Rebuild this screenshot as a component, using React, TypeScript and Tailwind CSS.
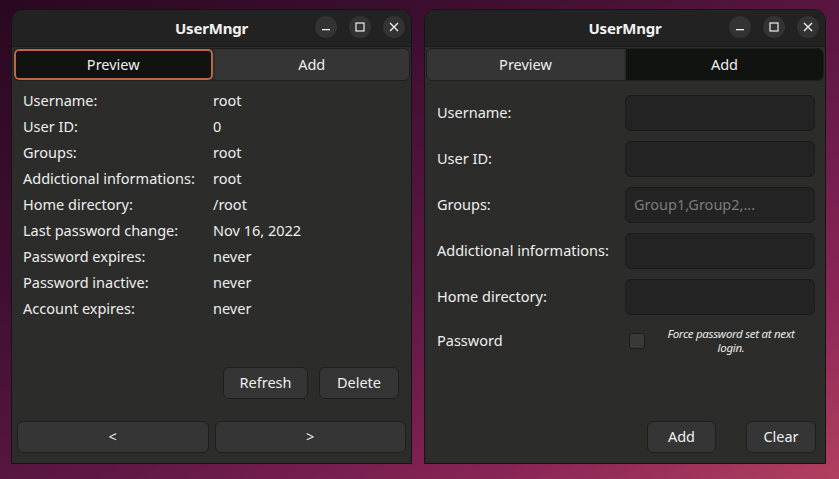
import React from "react";

const font = "font-['Noto_Sans','Open_Sans',sans-serif]";

interface TitleBarProps {
  title: string;
}

const TitleBar: React.FC<TitleBarProps> = ({ title }) => {
  return (
    <div className="relative h-[37px] shrink-0 bg-[#222222] border-b border-[#1a1a1a] flex items-center justify-center">
      <span className="text-[15px] font-bold text-[#f2f2f2] tracking-[-0.2px]">{title}</span>
      <div className="absolute right-[6px] top-[6px] flex gap-[12px]">
        <div className="w-[22px] h-[22px] rounded-full bg-[#333333] flex items-center justify-center">
          <svg width="10" height="10" viewBox="0 0 10 10">
            <rect x="1" y="7" width="8" height="1.3" fill="#eeeeee" />
          </svg>
        </div>
        <div className="w-[22px] h-[22px] rounded-full bg-[#333333] flex items-center justify-center">
          <svg width="10" height="10" viewBox="0 0 10 10">
            <rect x="1" y="1" width="8" height="8" fill="none" stroke="#eeeeee" strokeWidth="1.2" />
          </svg>
        </div>
        <div className="w-[22px] h-[22px] rounded-full bg-[#333333] flex items-center justify-center">
          <svg width="10" height="10" viewBox="0 0 10 10">
            <path d="M1 1 L9 9 M9 1 L1 9" stroke="#eeeeee" strokeWidth="1.4" />
          </svg>
        </div>
      </div>
    </div>
  );
};

interface TabsProps {
  active: "preview" | "add";
  focused?: boolean;
}

const Tabs: React.FC<TabsProps> = ({ active, focused }) => {
  const on = "bg-[#111311]";
  const off = "bg-[#353535]";
  return (
    <div className="mx-[1px] mt-[1px] h-[33px] shrink-0 flex rounded-[6px] border border-[#1e1e1e] overflow-hidden text-[14.5px] text-[#eeeeee]">
      <div
        className={
          active === "preview"
            ? focused
              ? "flex-1 flex items-center justify-center bg-[#111311] border-2 border-[#b86a48] rounded-[5px]"
              : `flex-1 flex items-center justify-center ${on}`
            : `flex-1 flex items-center justify-center ${off}`
        }
      >
        Preview
      </div>
      <div className={`w-[2px] ${active === "preview" && focused ? "bg-[#2c2d2b]" : "bg-transparent"}`} />
      <div
        className={
          active === "add"
            ? `flex-1 flex items-center justify-center ${on}`
            : `flex-1 flex items-center justify-center ${off}`
        }
      >
        Add
      </div>
    </div>
  );
};

const rows: [string, string][] = [
  ["Username:", "root"],
  ["User ID:", "0"],
  ["Groups:", "root"],
  ["Addictional informations:", "root"],
  ["Home directory:", "/root"],
  ["Last password change:", "Nov 16, 2022"],
  ["Password expires:", "never"],
  ["Password inactive:", "never"],
  ["Account expires:", "never"],
];

const btn =
  "h-[32px] rounded-[6px] bg-[#353535] border border-[#1f1f1f] flex items-center justify-center text-[14.5px] text-[#eeeeee]";

const PreviewWindow: React.FC = () => {
  return (
    <div className="w-[401px] h-[455px] shrink-0 flex flex-col rounded-t-[12px] border border-[#151515] bg-[#2c2d2b] overflow-hidden">
      <TitleBar title="UserMngr" />
      <Tabs active="preview" focused />
      <div className="pl-[11px] pt-[7px] grid grid-cols-[190px_1fr] auto-rows-[26px] items-center text-[14.5px] text-[#eeeeee]">
        {rows.map(([k, v]) => (
          <React.Fragment key={k}>
            <span className="whitespace-nowrap">{k}</span>
            <span>{v}</span>
          </React.Fragment>
        ))}
      </div>
      <div className="flex-1" />
      <div className="flex justify-end gap-[11px] pr-[12px]">
        <button className={`${btn} w-[85px]`}>Refresh</button>
        <button className={`${btn} w-[80px]`}>Delete</button>
      </div>
      <div className="flex gap-[6px] px-[5px] mt-[22px] mb-[10px]">
        <button className={`${btn} flex-1`}>&lt;</button>
        <button className={`${btn} flex-1`}>&gt;</button>
      </div>
    </div>
  );
};

const fields: [string, string][] = [
  ["Username:", ""],
  ["User ID:", ""],
  ["Groups:", "Group1,Group2,..."],
  ["Addictional informations:", ""],
  ["Home directory:", ""],
];

const AddWindow: React.FC = () => {
  return (
    <div className="w-[402px] h-[455px] shrink-0 flex flex-col rounded-t-[12px] border border-[#151515] bg-[#2c2d2b] overflow-hidden">
      <TitleBar title="UserMngr" />
      <Tabs active="add" />
      <div className="pl-[12px] pr-[9px] pt-[14px] flex flex-col gap-[10px] text-[14.5px] text-[#eeeeee]">
        {fields.map(([k, ph]) => (
          <div key={k} className="flex items-center">
            <span className="w-[188px] shrink-0 whitespace-nowrap">{k}</span>
            <div className="w-[190px] h-[36px] shrink-0 rounded-[6px] bg-[#232323] border border-[#1b1b1b] flex items-center pl-[8px] text-[#7b7b7b]">
              {ph}
            </div>
          </div>
        ))}
        <div className="flex items-center mt-[2px]">
          <span className="w-[192px] shrink-0">Password</span>
          <div className="w-[16px] h-[16px] shrink-0 rounded-[3px] bg-[#393939] border border-[#1c1c1c]" />
          <div className="ml-[21px] w-[130px] shrink-0 text-center italic text-[11.5px] leading-[14px] text-[#e8e8e8] tracking-[-0.3px]">
            Force password set at next login.
          </div>
        </div>
      </div>
      <div className="flex-1" />
      <div className="flex justify-end gap-[30px] pr-[9px] mb-[10px]">
        <button className={`${btn} w-[69px]`}>Add</button>
        <button className={`${btn} w-[70px]`}>Clear</button>
      </div>
    </div>
  );
};

export default function App() {
  return (
    <div
      className={`${font} w-[839px] h-[479px] overflow-hidden flex gap-[12px] pl-[11px] pt-[9px] bg-[linear-gradient(150deg,#2a0820_0%,#3f0f31_30%,#5e1744_55%,#8a2556_80%,#b1405f_100%)]`}
    >
      <PreviewWindow />
      <AddWindow />
    </div>
  );
}
